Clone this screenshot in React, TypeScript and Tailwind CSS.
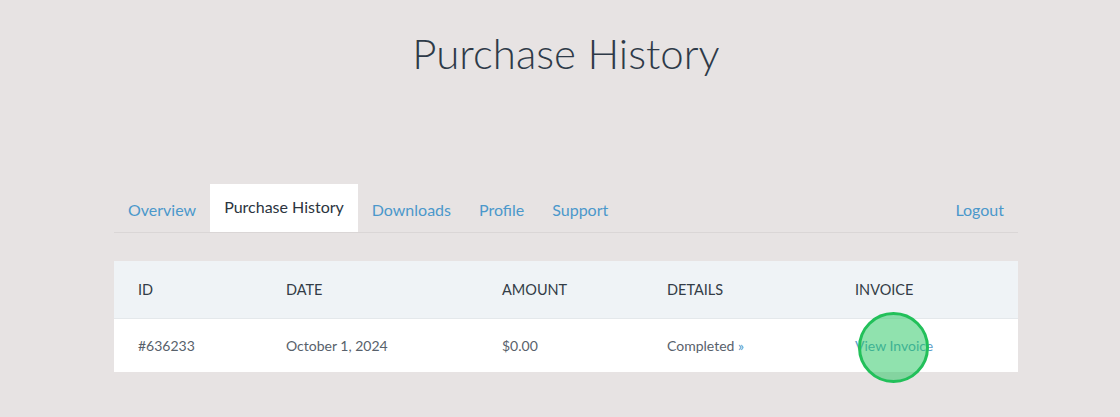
import React from 'react';

const tabs = ['Overview', 'Purchase History', 'Downloads', 'Profile', 'Support'];

const cols = 'grid grid-cols-[148px_216px_165px_188px_1fr]';

export default function App() {
  return (
    <div className="min-h-[417px] bg-[#e7e3e3] pl-[12px] font-['Lato',sans-serif] text-[#333d48]">
      <h1 className="pt-[24px] text-center text-[42px] font-light leading-[58px] text-[#2e3a48]">Purchase History</h1>

      <div className="mx-auto mt-[102px] w-[904px]">
        {/* tabs */}
        <div className="flex h-[49px] border-b border-[#dad6d6]">
          {tabs.map(t => (
            <div
              key={t}
              className={
                t === 'Purchase History'
                  ? 'flex h-[48px] items-center bg-white px-[14px] pb-[2px] text-[16px] text-[#2b343e]'
                  : 'flex h-[48px] items-center px-[14px] pt-[4px] text-[16px] text-[#4b98cb]'
              }
            >
              {t}
            </div>
          ))}
          <div className="ml-auto flex h-[48px] items-center px-[14px] pt-[4px] text-[16px] text-[#4b98cb]">Logout</div>
        </div>

        {/* table */}
        <div className="mt-[28px] w-[904px]">
          <div className={`${cols} h-[58px] items-center border-b border-[#e4e8eb] bg-[#eff3f6] text-[14.5px] uppercase text-[#333c46]`}>
            <div className="px-[24px]">ID</div>
            <div className="px-[24px]">Date</div>
            <div className="px-[24px]">Amount</div>
            <div className="px-[24px]">Details</div>
            <div className="px-[24px]">Invoice</div>
          </div>
          <div className={`${cols} h-[53px] items-center bg-white text-[14px] text-[#58616b]`}>
            <div className="px-[24px]">#636233</div>
            <div className="px-[24px]">October 1, 2024</div>
            <div className="px-[24px]">$0.00</div>
            <div className="px-[24px]">
              Completed <span className="text-[#4b98cb]">»</span>
            </div>
            <div className="relative px-[24px]">
              <span className="text-[#5c9ec9]">View Invoice</span>
              <span className="absolute left-[27px] top-[-23px] h-[71px] w-[71px] rounded-full border-[3px] border-[#22c05a] bg-[#22c55e]/50" />
            </div>
          </div>
        </div>
      </div>
    </div>
  );
}
